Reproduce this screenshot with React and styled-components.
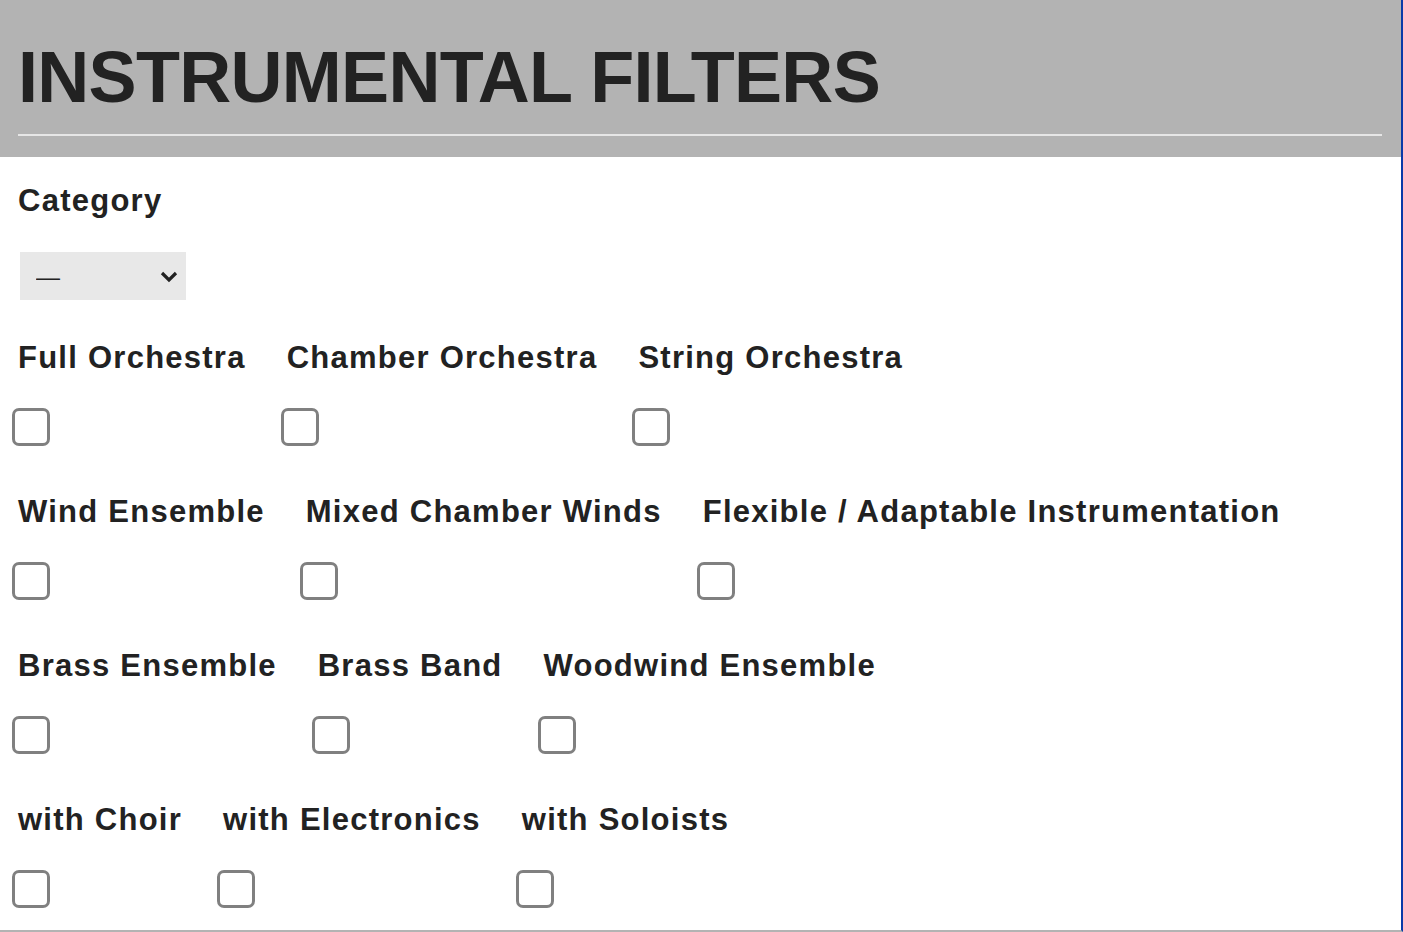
import React from 'react'
import styled, { createGlobalStyle } from 'styled-components'

const GlobalStyle = createGlobalStyle`
  html, body {
    margin: 0;
    padding: 0;
    background: #ffffff;
  }
  body {
    font-family: "Liberation Sans", Arial, sans-serif;
    color: #222222;
  }
`

const rows = [
  ['Full Orchestra', 'Chamber Orchestra', 'String Orchestra'],
  ['Wind Ensemble', 'Mixed Chamber Winds', 'Flexible / Adaptable Instrumentation'],
  ['Brass Ensemble', 'Brass Band', 'Woodwind Ensemble'],
  ['with Choir', 'with Electronics', 'with Soloists'],
]

const App = () => {
  return (
    <Wrapper>
      <GlobalStyle />
      <Header>
        <Title>INSTRUMENTAL FILTERS</Title>
        <Rule />
      </Header>
      <Content>
        <FieldLabel>Category</FieldLabel>
        <SelectWrap>
          <Select defaultValue="">
            <option value="">—</option>
          </Select>
          <Chevron viewBox="0 0 20 14" aria-hidden="true">
            <path d="M3 3 L10 10 L17 3" />
          </Chevron>
        </SelectWrap>
        {rows.map((row, i) => (
          <Row key={i}>
            {row.map((name) => (
              <Item key={name}>
                <FieldLabel as="label">{name}</FieldLabel>
                <Check type="checkbox" />
              </Item>
            ))}
          </Row>
        ))}
      </Content>
    </Wrapper>
  )
}

const Wrapper = styled.div`
  width: 1403px;
  height: 932px;
  box-sizing: border-box;
  border-right: 2px solid #0a3aa8;
  border-bottom: 2px solid #b3b3b3;
  overflow: hidden;
`

const Header = styled.div`
  background-color: #b3b3b3;
  padding: 41px 19px 21px 18px;
`

const Title = styled.h1`
  margin: 0;
  font-size: 72px;
  line-height: 72px;
  font-weight: 700;
  letter-spacing: -0.7px;
  color: #222222;
`

const Rule = styled.div`
  margin-top: 21px;
  height: 2px;
  background-color: #e6e6e6;
`

const Content = styled.div`
  padding: 29px 0 0 12px;
`

const FieldLabel = styled.div`
  display: block;
  padding-left: 6px;
  font-size: 31px;
  line-height: 30px;
  font-weight: 700;
  letter-spacing: 1.25px;
  color: #222222;
`

const SelectWrap = styled.div`
  position: relative;
  margin: 36px 0 0 8px;
  width: 166px;
  height: 48px;
`

const Select = styled.select`
  appearance: none;
  width: 100%;
  height: 100%;
  border: none;
  border-radius: 0;
  background-color: #e8e8e8;
  padding: 0 0 0 16px;
  font-family: "Liberation Sans", Arial, sans-serif;
  font-size: 24px;
  color: #222222;
  outline: none;
`

const Chevron = styled.svg`
  position: absolute;
  right: 7px;
  top: 18px;
  width: 20px;
  height: 14px;
  pointer-events: none;
  path {
    fill: none;
    stroke: #222222;
    stroke-width: 3.2;
  }
`

const Row = styled.div`
  display: flex;
  gap: 35px;
  margin-top: 43px;
  & + & {
    margin-top: 51px;
  }
`

const Item = styled.div`
  display: flex;
  flex-direction: column;
  align-items: flex-start;
`

const Check = styled.input`
  appearance: none;
  margin: 35px 0 0 0;
  width: 38px;
  height: 38px;
  box-sizing: border-box;
  border: 3px solid #808080;
  border-radius: 7px;
  background: #ffffff;
`

export default App
